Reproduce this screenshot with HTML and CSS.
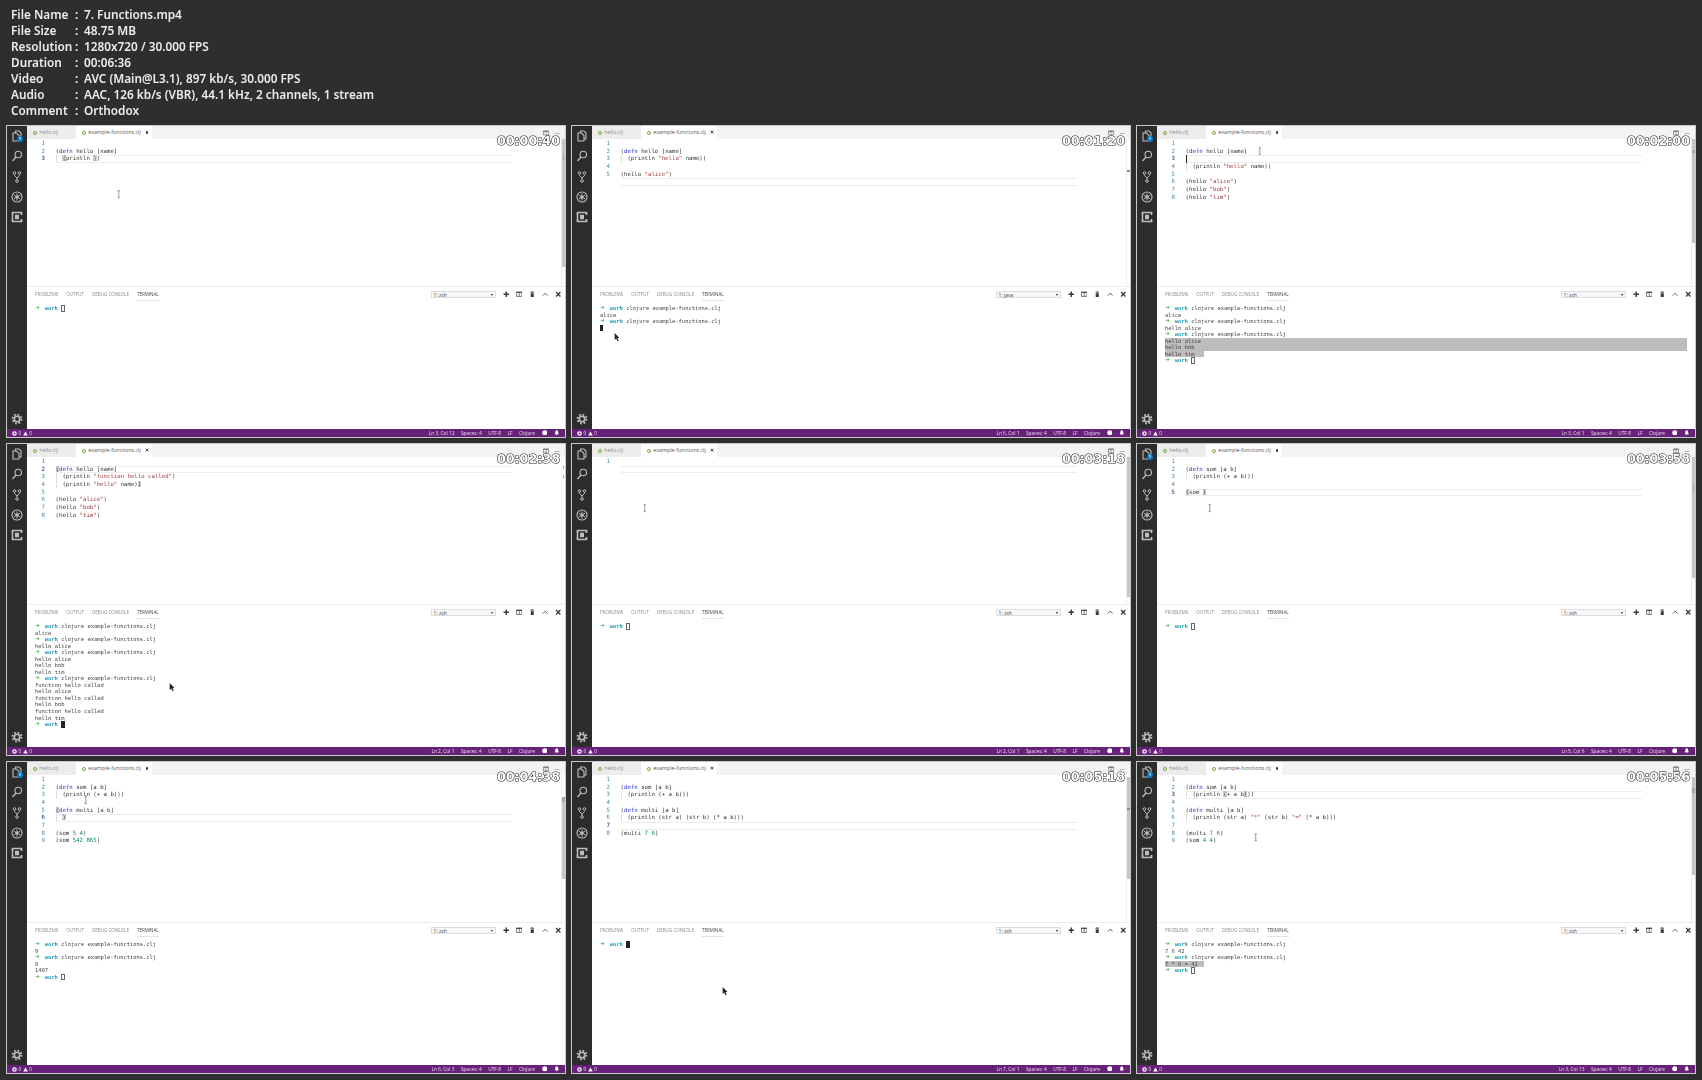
FILE: index.html
```html
<!DOCTYPE html>
<html lang="en">
<head>
<meta charset="utf-8">
<title>7. Functions.mp4</title>
<link rel="stylesheet" href="styles.css">
</head>
<body>
<svg class="defs" aria-hidden="true">
  <symbol id="i-files" viewBox="0 0 24 24"><path d="M9 6V2h7l4 4v12h-4M4 6h7l5 5v11H4z" fill="none" stroke="currentColor" stroke-width="2.2"/></symbol>
  <symbol id="i-search" viewBox="0 0 24 24"><circle cx="14.5" cy="9" r="6.5" fill="none" stroke="currentColor" stroke-width="2.2"/><path d="M10 14l-7 8" stroke="currentColor" stroke-width="2.8"/></symbol>
  <symbol id="i-git" viewBox="0 0 24 24"><g fill="none" stroke="currentColor" stroke-width="2"><circle cx="7" cy="4" r="2.6"/><circle cx="17" cy="4" r="2.6"/><circle cx="12" cy="20" r="2.6"/><path d="M7 7v2l5 5 5-5V7M12 14v3"/></g></symbol>
  <symbol id="i-debug" viewBox="0 0 24 24"><circle cx="12" cy="12" r="10" fill="none" stroke="currentColor" stroke-width="2.2"/><path d="M12 5v14M5.900 8.500l12.200 7M5.900 15.500l12.200-7" stroke="currentColor" stroke-width="2"/><circle cx="12" cy="12" r="3.200" fill="currentColor"/></symbol>
  <symbol id="i-ext" viewBox="0 0 24 24"><path d="M3 8V3h18v5M3 16v5h18v-5" fill="none" stroke="currentColor" stroke-width="3"/><path d="M3 3v18M21 3v4M21 17v4" stroke="currentColor" stroke-width="3"/><rect x="8" y="7.500" width="8" height="9" fill="currentColor"/></symbol>
  <symbol id="i-gear" viewBox="0 0 24 24"><circle cx="12" cy="12" r="5.500" fill="none" stroke="currentColor" stroke-width="3.400"/><circle cx="12" cy="12" r="9" fill="none" stroke="currentColor" stroke-width="3.600" stroke-dasharray="3.530 3.540"/></symbol>
  <symbol id="i-plus" viewBox="0 0 12 12"><path d="M6 1v10M1 6h10" stroke="currentColor" stroke-width="2.600"/></symbol>
  <symbol id="i-split" viewBox="0 0 12 12"><path d="M1 2h10v8H1zM6 2v8" fill="none" stroke="currentColor" stroke-width="1.200"/><path d="M1 2.500h10" stroke="currentColor" stroke-width="1.800"/></symbol>
  <symbol id="i-trash" viewBox="0 0 12 12"><path d="M4.500 1h3M2.500 2.500h7" stroke="currentColor" stroke-width="1.300"/><path d="M3.200 4h5.600v7H3.200z" fill="currentColor"/></symbol>
  <symbol id="i-up" viewBox="0 0 12 12"><path d="M1.500 8.500L6 4l4.500 4.500" fill="none" stroke="currentColor" stroke-width="1.500"/></symbol>
  <symbol id="i-x" viewBox="0 0 12 12"><path d="M2 2l8 8M10 2l-8 8" stroke="currentColor" stroke-width="2.400"/></symbol>
  <symbol id="i-smile" viewBox="0 0 12 12"><circle cx="6" cy="6" r="5.500" fill="currentColor"/></symbol>
  <symbol id="i-bell" viewBox="0 0 12 12"><path d="M6 .5C8 .5 9 2 9 4.500c0 2 .8 3.500 1.800 4.500H1.200C2.200 8 3 6.500 3 4.500 3 2 4 .5 6 .5zM4.700 10h2.600v1.500H4.700z" fill="currentColor"/></symbol>
  <symbol id="i-err" viewBox="0 0 12 12"><circle cx="6" cy="6" r="4" fill="none" stroke="currentColor" stroke-width="3"/></symbol>
  <symbol id="i-warn" viewBox="0 0 12 12"><path d="M6 1l5.500 10H.5z" fill="currentColor"/></symbol>
  <symbol id="i-ibeam" viewBox="0 0 6 14"><path d="M1 1h4M1 13h4M3 1v12" fill="none" stroke="currentColor" stroke-width="1"/></symbol>
  <symbol id="i-arrow" viewBox="0 0 8 13"><path d="M1 0v10l2.400-2.200L5 12l1.800-.8-1.600-4H8z" fill="currentColor"/></symbol>
</svg>

<header class="meta">
  <span>File Name</span><span>:</span><span>7. Functions.mp4</span>
  <span>File Size</span><span>:</span><span>48.75 MB</span>
  <span>Resolution</span><span>:</span><span>1280x720 / 30.000 FPS</span>
  <span>Duration</span><span>:</span><span>00:06:36</span>
  <span>Video</span><span>:</span><span>AVC (Main@L3.1), 897 kb/s, 30.000 FPS</span>
  <span>Audio</span><span>:</span><span>AAC, 126 kb/s (VBR), 44.1 kHz, 2 channels, 1 stream</span>
  <span>Comment</span><span>:</span><span>Orthodox</span>
</header>

<main class="sheet">

<!-- 00:00:40 -->
<article class="tile">
  <div class="shot">
    <div class="body">
      <nav class="side">
        <span class="act"><svg><use href="#i-files"/></svg><b class="badge">1</b></span>
        <span class="act"><svg><use href="#i-search"/></svg></span>
        <span class="act"><svg><use href="#i-git"/></svg></span>
        <span class="act"><svg><use href="#i-debug"/></svg></span>
        <span class="act"><svg><use href="#i-ext"/></svg></span>
        <span class="act gear"><svg><use href="#i-gear"/></svg></span>
      </nav>
      <div class="work">
        <div class="tabs">
          <span class="tab"><i class="fi"></i>hello.clj</span>
          <span class="tab on"><i class="fi"></i>example-functions.clj<b class="dot"></b></span>
          <span class="tools"><svg><use href="#i-split"/></svg><span class="more">···</span></span>
        </div>
        <div class="editor">
          <div class="row"><span class="no">1</span><span class="code"></span></div>
          <div class="row"><span class="no">2</span><span class="code">(<span class="k">defn</span> hello [name]</span></div>
          <div class="row cur"><span class="no">3</span><span class="code g">  <span class="bm">(</span>println <span class="bm">)</span>)</span></div>
          <div class="track"><div class="thumb t-a"></div><div class="mark m-a"></div></div>
        </div>
        <section class="panel">
          <div class="phead">
            <span class="ptab">Problems</span><span class="ptab">Output</span><span class="ptab">Debug Console</span><span class="ptab on">Terminal</span>
            <span class="pick">1: zsh<i class="caret"></i></span>
            <span class="pico"><svg><use href="#i-plus"/></svg></span><span class="pico"><svg><use href="#i-split"/></svg></span><span class="pico"><svg><use href="#i-trash"/></svg></span><span class="pico"><svg><use href="#i-up"/></svg></span><span class="pico"><svg><use href="#i-x"/></svg></span>
          </div>
          <div class="term">
            <div><span class="arw">➜</span>  <span class="cwd">work</span> <i class="box"></i></div>
          </div>
        </section>
      </div>
    </div>
    <footer class="status">
      <svg><use href="#i-err"/></svg><span>0</span><svg><use href="#i-warn"/></svg><span>0</span>
      <span class="right">Ln 3, Col 12</span><span>Spaces: 4</span><span>UTF-8</span><span>LF</span><span>Clojure</span><svg class="si"><use href="#i-smile"/></svg><svg class="si"><use href="#i-bell"/></svg>
    </footer>
    <svg class="ptr ibeam p1"><use href="#i-ibeam"/></svg>
  </div>
  <time class="stamp">00:00:40</time>
</article>

<!-- 00:01:20 -->
<article class="tile">
  <div class="shot">
    <div class="body">
      <nav class="side">
        <span class="act"><svg><use href="#i-files"/></svg></span>
        <span class="act"><svg><use href="#i-search"/></svg></span>
        <span class="act"><svg><use href="#i-git"/></svg></span>
        <span class="act"><svg><use href="#i-debug"/></svg></span>
        <span class="act"><svg><use href="#i-ext"/></svg></span>
        <span class="act gear"><svg><use href="#i-gear"/></svg></span>
      </nav>
      <div class="work">
        <div class="tabs">
          <span class="tab"><i class="fi"></i>hello.clj</span>
          <span class="tab on"><i class="fi"></i>example-functions.clj<svg class="close"><use href="#i-x"/></svg></span>
          <span class="tools"><svg><use href="#i-split"/></svg><span class="more">···</span></span>
        </div>
        <div class="editor">
          <div class="row"><span class="no">1</span><span class="code"></span></div>
          <div class="row"><span class="no">2</span><span class="code">(<span class="k">defn</span> hello [name]</span></div>
          <div class="row"><span class="no">3</span><span class="code g">  (println <span class="s">"hello"</span> name))</span></div>
          <div class="row"><span class="no">4</span><span class="code"></span></div>
          <div class="row"><span class="no">5</span><span class="code">(hello <span class="s">"alice"</span>)</span></div>
          <div class="row cur"><span class="no"></span><span class="code"></span></div>
          <div class="track"><div class="mark m-b"></div></div>
        </div>
        <section class="panel">
          <div class="phead">
            <span class="ptab">Problems</span><span class="ptab">Output</span><span class="ptab">Debug Console</span><span class="ptab on">Terminal</span>
            <span class="pick">1: java<i class="caret"></i></span>
            <span class="pico"><svg><use href="#i-plus"/></svg></span><span class="pico"><svg><use href="#i-split"/></svg></span><span class="pico"><svg><use href="#i-trash"/></svg></span><span class="pico"><svg><use href="#i-up"/></svg></span><span class="pico"><svg><use href="#i-x"/></svg></span>
          </div>
          <div class="term">
            <div><span class="arw">➜</span>  <span class="cwd">work</span> clojure example-functions.clj</div>
            <div>alice</div>
            <div><span class="arw">➜</span>  <span class="cwd">work</span> clojure example-functions.clj</div>
            <div><i class="block"></i></div>
          </div>
        </section>
      </div>
    </div>
    <footer class="status">
      <svg><use href="#i-err"/></svg><span>0</span><svg><use href="#i-warn"/></svg><span>0</span>
      <span class="right">Ln 6, Col 1</span><span>Spaces: 4</span><span>UTF-8</span><span>LF</span><span>Clojure</span><svg class="si"><use href="#i-smile"/></svg><svg class="si"><use href="#i-bell"/></svg>
    </footer>
    <svg class="ptr arrow p2"><use href="#i-arrow"/></svg>
  </div>
  <time class="stamp">00:01:20</time>
</article>

<!-- 00:02:00 -->
<article class="tile">
  <div class="shot">
    <div class="body">
      <nav class="side">
        <span class="act"><svg><use href="#i-files"/></svg><b class="badge">1</b></span>
        <span class="act"><svg><use href="#i-search"/></svg></span>
        <span class="act"><svg><use href="#i-git"/></svg></span>
        <span class="act"><svg><use href="#i-debug"/></svg></span>
        <span class="act"><svg><use href="#i-ext"/></svg></span>
        <span class="act gear"><svg><use href="#i-gear"/></svg></span>
      </nav>
      <div class="work">
        <div class="tabs">
          <span class="tab"><i class="fi"></i>hello.clj</span>
          <span class="tab on"><i class="fi"></i>example-functions.clj<b class="dot"></b></span>
          <span class="tools"><svg><use href="#i-split"/></svg><span class="more">···</span></span>
        </div>
        <div class="editor">
          <div class="row"><span class="no">1</span><span class="code"></span></div>
          <div class="row"><span class="no">2</span><span class="code">(<span class="k">defn</span> hello [name]</span></div>
          <div class="row cur"><span class="no">3</span><span class="code"><i class="caretbar"></i></span></div>
          <div class="row"><span class="no">4</span><span class="code g">  (println <span class="s">"hello"</span> name))</span></div>
          <div class="row"><span class="no">5</span><span class="code"></span></div>
          <div class="row"><span class="no">6</span><span class="code">(hello <span class="s">"alice"</span>)</span></div>
          <div class="row"><span class="no">7</span><span class="code">(hello <span class="s">"bob"</span>)</span></div>
          <div class="row"><span class="no">8</span><span class="code">(hello <span class="s">"tim"</span>)</span></div>
          <div class="track"><div class="thumb t-c"></div><div class="mark m-c"></div></div>
        </div>
        <section class="panel">
          <div class="phead">
            <span class="ptab">Problems</span><span class="ptab">Output</span><span class="ptab">Debug Console</span><span class="ptab on">Terminal</span>
            <span class="pick">1: zsh<i class="caret"></i></span>
            <span class="pico"><svg><use href="#i-plus"/></svg></span><span class="pico"><svg><use href="#i-split"/></svg></span><span class="pico"><svg><use href="#i-trash"/></svg></span><span class="pico"><svg><use href="#i-up"/></svg></span><span class="pico"><svg><use href="#i-x"/></svg></span>
          </div>
          <div class="term">
            <div><span class="arw">➜</span>  <span class="cwd">work</span> clojure example-functions.clj</div>
            <div>alice</div>
            <div><span class="arw">➜</span>  <span class="cwd">work</span> clojure example-functions.clj</div>
            <div>hello alice</div>
            <div><span class="arw">➜</span>  <span class="cwd">work</span> clojure example-functions.clj</div>
            <div class="sel wide">hello alice</div>
            <div class="sel wide">hello bob</div>
            <div class="sel short">hello tim</div>
            <div><span class="arw">➜</span>  <span class="cwd">work</span> <i class="box"></i></div>
          </div>
        </section>
      </div>
    </div>
    <footer class="status">
      <svg><use href="#i-err"/></svg><span>0</span><svg><use href="#i-warn"/></svg><span>0</span>
      <span class="right">Ln 3, Col 1</span><span>Spaces: 4</span><span>UTF-8</span><span>LF</span><span>Clojure</span><svg class="si"><use href="#i-smile"/></svg><svg class="si"><use href="#i-bell"/></svg>
    </footer>
    <svg class="ptr ibeam p3"><use href="#i-ibeam"/></svg>
  </div>
  <time class="stamp">00:02:00</time>
</article>

<!-- 00:02:38 -->
<article class="tile">
  <div class="shot">
    <div class="body">
      <nav class="side">
        <span class="act"><svg><use href="#i-files"/></svg></span>
        <span class="act"><svg><use href="#i-search"/></svg></span>
        <span class="act"><svg><use href="#i-git"/></svg></span>
        <span class="act"><svg><use href="#i-debug"/></svg></span>
        <span class="act"><svg><use href="#i-ext"/></svg></span>
        <span class="act gear"><svg><use href="#i-gear"/></svg></span>
      </nav>
      <div class="work">
        <div class="tabs">
          <span class="tab"><i class="fi"></i>hello.clj</span>
          <span class="tab on"><i class="fi"></i>example-functions.clj<svg class="close"><use href="#i-x"/></svg></span>
          <span class="tools"><svg><use href="#i-split"/></svg><span class="more">···</span></span>
        </div>
        <div class="editor">
          <div class="row"><span class="no">1</span><span class="code"></span></div>
          <div class="row cur"><span class="no">2</span><span class="code"><span class="bm">(</span><span class="k">defn</span> hello [name]</span></div>
          <div class="row"><span class="no">3</span><span class="code g">  (println <span class="s">"function hello called"</span>)</span></div>
          <div class="row"><span class="no">4</span><span class="code g">  (println <span class="s">"hello"</span> name)<span class="bm">)</span></span></div>
          <div class="row"><span class="no">5</span><span class="code"></span></div>
          <div class="row"><span class="no">6</span><span class="code">(hello <span class="s">"alice"</span>)</span></div>
          <div class="row"><span class="no">7</span><span class="code">(hello <span class="s">"bob"</span>)</span></div>
          <div class="row"><span class="no">8</span><span class="code">(hello <span class="s">"tim"</span>)</span></div>
          <div class="track"><div class="mark m-d"></div><div class="mark m-e"></div></div>
        </div>
        <section class="panel">
          <div class="phead">
            <span class="ptab">Problems</span><span class="ptab">Output</span><span class="ptab">Debug Console</span><span class="ptab on">Terminal</span>
            <span class="pick">1: zsh<i class="caret"></i></span>
            <span class="pico"><svg><use href="#i-plus"/></svg></span><span class="pico"><svg><use href="#i-split"/></svg></span><span class="pico"><svg><use href="#i-trash"/></svg></span><span class="pico"><svg><use href="#i-up"/></svg></span><span class="pico"><svg><use href="#i-x"/></svg></span>
          </div>
          <div class="term">
            <div><span class="arw">➜</span>  <span class="cwd">work</span> clojure example-functions.clj</div>
            <div>alice</div>
            <div><span class="arw">➜</span>  <span class="cwd">work</span> clojure example-functions.clj</div>
            <div>hello alice</div>
            <div><span class="arw">➜</span>  <span class="cwd">work</span> clojure example-functions.clj</div>
            <div>hello alice</div>
            <div>hello bob</div>
            <div>hello tim</div>
            <div><span class="arw">➜</span>  <span class="cwd">work</span> clojure example-functions.clj</div>
            <div>function hello called</div>
            <div>hello alice</div>
            <div>function hello called</div>
            <div>hello bob</div>
            <div>function hello called</div>
            <div>hello tim</div>
            <div><span class="arw">➜</span>  <span class="cwd">work</span> <i class="block"></i></div>
          </div>
        </section>
      </div>
    </div>
    <footer class="status">
      <svg><use href="#i-err"/></svg><span>0</span><svg><use href="#i-warn"/></svg><span>0</span>
      <span class="right">Ln 2, Col 1</span><span>Spaces: 4</span><span>UTF-8</span><span>LF</span><span>Clojure</span><svg class="si"><use href="#i-smile"/></svg><svg class="si"><use href="#i-bell"/></svg>
    </footer>
    <svg class="ptr arrow p4"><use href="#i-arrow"/></svg>
  </div>
  <time class="stamp">00:02:38</time>
</article>

<!-- 00:03:18 -->
<article class="tile">
  <div class="shot">
    <div class="body">
      <nav class="side">
        <span class="act"><svg><use href="#i-files"/></svg></span>
        <span class="act"><svg><use href="#i-search"/></svg></span>
        <span class="act"><svg><use href="#i-git"/></svg></span>
        <span class="act"><svg><use href="#i-debug"/></svg></span>
        <span class="act"><svg><use href="#i-ext"/></svg></span>
        <span class="act gear"><svg><use href="#i-gear"/></svg></span>
      </nav>
      <div class="work">
        <div class="tabs">
          <span class="tab"><i class="fi"></i>hello.clj</span>
          <span class="tab on"><i class="fi"></i>example-functions.clj<svg class="close"><use href="#i-x"/></svg></span>
          <span class="tools"><svg><use href="#i-split"/></svg><span class="more">···</span></span>
        </div>
        <div class="editor">
          <div class="row"><span class="no">1</span><span class="code"></span></div>
          <div class="row cur"><span class="no"></span><span class="code"></span></div>
          <div class="track"><div class="thumb t-e"></div></div>
        </div>
        <section class="panel">
          <div class="phead">
            <span class="ptab">Problems</span><span class="ptab">Output</span><span class="ptab">Debug Console</span><span class="ptab on">Terminal</span>
            <span class="pick">1: zsh<i class="caret"></i></span>
            <span class="pico"><svg><use href="#i-plus"/></svg></span><span class="pico"><svg><use href="#i-split"/></svg></span><span class="pico"><svg><use href="#i-trash"/></svg></span><span class="pico"><svg><use href="#i-up"/></svg></span><span class="pico"><svg><use href="#i-x"/></svg></span>
          </div>
          <div class="term">
            <div><span class="arw">➜</span>  <span class="cwd">work</span> <i class="box"></i></div>
          </div>
        </section>
      </div>
    </div>
    <footer class="status">
      <svg><use href="#i-err"/></svg><span>0</span><svg><use href="#i-warn"/></svg><span>0</span>
      <span class="right">Ln 2, Col 1</span><span>Spaces: 4</span><span>UTF-8</span><span>LF</span><span>Clojure</span><svg class="si"><use href="#i-smile"/></svg><svg class="si"><use href="#i-bell"/></svg>
    </footer>
    <svg class="ptr ibeam p5"><use href="#i-ibeam"/></svg>
  </div>
  <time class="stamp">00:03:18</time>
</article>

<!-- 00:03:58 -->
<article class="tile">
  <div class="shot">
    <div class="body">
      <nav class="side">
        <span class="act"><svg><use href="#i-files"/></svg><b class="badge">1</b></span>
        <span class="act"><svg><use href="#i-search"/></svg></span>
        <span class="act"><svg><use href="#i-git"/></svg></span>
        <span class="act"><svg><use href="#i-debug"/></svg></span>
        <span class="act"><svg><use href="#i-ext"/></svg></span>
        <span class="act gear"><svg><use href="#i-gear"/></svg></span>
      </nav>
      <div class="work">
        <div class="tabs">
          <span class="tab"><i class="fi"></i>hello.clj</span>
          <span class="tab on"><i class="fi"></i>example-functions.clj<b class="dot"></b></span>
          <span class="tools"><svg><use href="#i-split"/></svg><span class="more">···</span></span>
        </div>
        <div class="editor">
          <div class="row"><span class="no">1</span><span class="code"></span></div>
          <div class="row"><span class="no">2</span><span class="code">(<span class="k">defn</span> som [a b]</span></div>
          <div class="row"><span class="no">3</span><span class="code g">  (println (+ a b)))</span></div>
          <div class="row"><span class="no">4</span><span class="code"></span></div>
          <div class="row cur"><span class="no">5</span><span class="code"><span class="bm">(</span>som <span class="bm">)</span></span></div>
          <div class="track"><div class="thumb t-f"></div><div class="mark m-f"></div></div>
        </div>
        <section class="panel">
          <div class="phead">
            <span class="ptab">Problems</span><span class="ptab">Output</span><span class="ptab">Debug Console</span><span class="ptab on">Terminal</span>
            <span class="pick">1: zsh<i class="caret"></i></span>
            <span class="pico"><svg><use href="#i-plus"/></svg></span><span class="pico"><svg><use href="#i-split"/></svg></span><span class="pico"><svg><use href="#i-trash"/></svg></span><span class="pico"><svg><use href="#i-up"/></svg></span><span class="pico"><svg><use href="#i-x"/></svg></span>
          </div>
          <div class="term">
            <div><span class="arw">➜</span>  <span class="cwd">work</span> <i class="box"></i></div>
          </div>
        </section>
      </div>
    </div>
    <footer class="status">
      <svg><use href="#i-err"/></svg><span>0</span><svg><use href="#i-warn"/></svg><span>0</span>
      <span class="right">Ln 5, Col 6</span><span>Spaces: 4</span><span>UTF-8</span><span>LF</span><span>Clojure</span><svg class="si"><use href="#i-smile"/></svg><svg class="si"><use href="#i-bell"/></svg>
    </footer>
    <svg class="ptr ibeam p6"><use href="#i-ibeam"/></svg>
  </div>
  <time class="stamp">00:03:58</time>
</article>

<!-- 00:04:38 -->
<article class="tile">
  <div class="shot">
    <div class="body">
      <nav class="side">
        <span class="act"><svg><use href="#i-files"/></svg><b class="badge">1</b></span>
        <span class="act"><svg><use href="#i-search"/></svg></span>
        <span class="act"><svg><use href="#i-git"/></svg></span>
        <span class="act"><svg><use href="#i-debug"/></svg></span>
        <span class="act"><svg><use href="#i-ext"/></svg></span>
        <span class="act gear"><svg><use href="#i-gear"/></svg></span>
      </nav>
      <div class="work">
        <div class="tabs">
          <span class="tab"><i class="fi"></i>hello.clj</span>
          <span class="tab on"><i class="fi"></i>example-functions.clj<b class="dot"></b></span>
          <span class="tools"><svg><use href="#i-split"/></svg><span class="more">···</span></span>
        </div>
        <div class="editor">
          <div class="row"><span class="no">1</span><span class="code"></span></div>
          <div class="row"><span class="no">2</span><span class="code">(<span class="k">defn</span> som [a b]</span></div>
          <div class="row"><span class="no">3</span><span class="code g">  (println (+ a b)))</span></div>
          <div class="row"><span class="no">4</span><span class="code"></span></div>
          <div class="row"><span class="no">5</span><span class="code"><span class="bm">(</span><span class="k">defn</span> multi [a b]</span></div>
          <div class="row cur"><span class="no">6</span><span class="code g">  <span class="bm">)</span></span></div>
          <div class="row"><span class="no">7</span><span class="code"></span></div>
          <div class="row"><span class="no">8</span><span class="code">(som <span class="n">5</span> <span class="n">4</span>)</span></div>
          <div class="row"><span class="no">9</span><span class="code">(som <span class="n">542</span> <span class="n">865</span>)</span></div>
          <div class="track"><div class="thumb t-g"></div><div class="mark m-g"></div></div>
        </div>
        <section class="panel">
          <div class="phead">
            <span class="ptab">Problems</span><span class="ptab">Output</span><span class="ptab">Debug Console</span><span class="ptab on">Terminal</span>
            <span class="pick">1: zsh<i class="caret"></i></span>
            <span class="pico"><svg><use href="#i-plus"/></svg></span><span class="pico"><svg><use href="#i-split"/></svg></span><span class="pico"><svg><use href="#i-trash"/></svg></span><span class="pico"><svg><use href="#i-up"/></svg></span><span class="pico"><svg><use href="#i-x"/></svg></span>
          </div>
          <div class="term">
            <div><span class="arw">➜</span>  <span class="cwd">work</span> clojure example-functions.clj</div>
            <div>9</div>
            <div><span class="arw">➜</span>  <span class="cwd">work</span> clojure example-functions.clj</div>
            <div>9</div>
            <div>1407</div>
            <div><span class="arw">➜</span>  <span class="cwd">work</span> <i class="box"></i></div>
          </div>
        </section>
      </div>
    </div>
    <footer class="status">
      <svg><use href="#i-err"/></svg><span>0</span><svg><use href="#i-warn"/></svg><span>0</span>
      <span class="right">Ln 6, Col 3</span><span>Spaces: 4</span><span>UTF-8</span><span>LF</span><span>Clojure</span><svg class="si"><use href="#i-smile"/></svg><svg class="si"><use href="#i-bell"/></svg>
    </footer>
    <svg class="ptr ibeam p7"><use href="#i-ibeam"/></svg>
  </div>
  <time class="stamp">00:04:38</time>
</article>

<!-- 00:05:18 -->
<article class="tile">
  <div class="shot">
    <div class="body">
      <nav class="side">
        <span class="act"><svg><use href="#i-files"/></svg></span>
        <span class="act"><svg><use href="#i-search"/></svg></span>
        <span class="act"><svg><use href="#i-git"/></svg></span>
        <span class="act"><svg><use href="#i-debug"/></svg></span>
        <span class="act"><svg><use href="#i-ext"/></svg></span>
        <span class="act gear"><svg><use href="#i-gear"/></svg></span>
      </nav>
      <div class="work">
        <div class="tabs">
          <span class="tab"><i class="fi"></i>hello.clj</span>
          <span class="tab on"><i class="fi"></i>example-functions.clj<svg class="close"><use href="#i-x"/></svg></span>
          <span class="tools"><svg><use href="#i-split"/></svg><span class="more">···</span></span>
        </div>
        <div class="editor">
          <div class="row"><span class="no">1</span><span class="code"></span></div>
          <div class="row"><span class="no">2</span><span class="code">(<span class="k">defn</span> som [a b]</span></div>
          <div class="row"><span class="no">3</span><span class="code g">  (println (+ a b)))</span></div>
          <div class="row"><span class="no">4</span><span class="code"></span></div>
          <div class="row"><span class="no">5</span><span class="code">(<span class="k">defn</span> multi [a b]</span></div>
          <div class="row"><span class="no">6</span><span class="code g">  (println (str a) (str b) (* a b)))</span></div>
          <div class="row cur"><span class="no">7</span><span class="code"></span></div>
          <div class="row"><span class="no">8</span><span class="code">(multi <span class="n">7</span> <span class="n">6</span>)</span></div>
          <div class="track"><div class="thumb t-h"></div><div class="mark m-h"></div></div>
        </div>
        <section class="panel">
          <div class="phead">
            <span class="ptab">Problems</span><span class="ptab">Output</span><span class="ptab">Debug Console</span><span class="ptab on">Terminal</span>
            <span class="pick">1: zsh<i class="caret"></i></span>
            <span class="pico"><svg><use href="#i-plus"/></svg></span><span class="pico"><svg><use href="#i-split"/></svg></span><span class="pico"><svg><use href="#i-trash"/></svg></span><span class="pico"><svg><use href="#i-up"/></svg></span><span class="pico"><svg><use href="#i-x"/></svg></span>
          </div>
          <div class="term">
            <div><span class="arw">➜</span>  <span class="cwd">work</span> <i class="block"></i></div>
          </div>
        </section>
      </div>
    </div>
    <footer class="status">
      <svg><use href="#i-err"/></svg><span>0</span><svg><use href="#i-warn"/></svg><span>0</span>
      <span class="right">Ln 7, Col 1</span><span>Spaces: 4</span><span>UTF-8</span><span>LF</span><span>Clojure</span><svg class="si"><use href="#i-smile"/></svg><svg class="si"><use href="#i-bell"/></svg>
    </footer>
    <svg class="ptr arrow p8"><use href="#i-arrow"/></svg>
  </div>
  <time class="stamp">00:05:18</time>
</article>

<!-- 00:05:56 -->
<article class="tile">
  <div class="shot">
    <div class="body">
      <nav class="side">
        <span class="act"><svg><use href="#i-files"/></svg><b class="badge">1</b></span>
        <span class="act"><svg><use href="#i-search"/></svg></span>
        <span class="act"><svg><use href="#i-git"/></svg></span>
        <span class="act"><svg><use href="#i-debug"/></svg></span>
        <span class="act"><svg><use href="#i-ext"/></svg></span>
        <span class="act gear"><svg><use href="#i-gear"/></svg></span>
      </nav>
      <div class="work">
        <div class="tabs">
          <span class="tab"><i class="fi"></i>hello.clj</span>
          <span class="tab on"><i class="fi"></i>example-functions.clj<b class="dot"></b></span>
          <span class="tools"><svg><use href="#i-split"/></svg><span class="more">···</span></span>
        </div>
        <div class="editor">
          <div class="row"><span class="no">1</span><span class="code"></span></div>
          <div class="row"><span class="no">2</span><span class="code">(<span class="k">defn</span> som [a b]</span></div>
          <div class="row cur"><span class="no">3</span><span class="code g">  (println <span class="bm">(</span>+ a b<span class="bm">)</span>))</span></div>
          <div class="row"><span class="no">4</span><span class="code"></span></div>
          <div class="row"><span class="no">5</span><span class="code">(<span class="k">defn</span> multi [a b]</span></div>
          <div class="row"><span class="no">6</span><span class="code g">  (println (str a) <span class="s">"*"</span> (str b) <span class="s">"="</span> (* a b)))</span></div>
          <div class="row"><span class="no">7</span><span class="code"></span></div>
          <div class="row"><span class="no">8</span><span class="code">(multi <span class="n">7</span> <span class="n">6</span>)</span></div>
          <div class="row"><span class="no">9</span><span class="code">(som <span class="n">4</span> <span class="n">4</span>)</span></div>
          <div class="track"><div class="thumb t-i"></div><div class="mark m-i"></div></div>
        </div>
        <section class="panel">
          <div class="phead">
            <span class="ptab">Problems</span><span class="ptab">Output</span><span class="ptab">Debug Console</span><span class="ptab on">Terminal</span>
            <span class="pick">1: zsh<i class="caret"></i></span>
            <span class="pico"><svg><use href="#i-plus"/></svg></span><span class="pico"><svg><use href="#i-split"/></svg></span><span class="pico"><svg><use href="#i-trash"/></svg></span><span class="pico"><svg><use href="#i-up"/></svg></span><span class="pico"><svg><use href="#i-x"/></svg></span>
          </div>
          <div class="term">
            <div><span class="arw">➜</span>  <span class="cwd">work</span> clojure example-functions.clj</div>
            <div>7 6 42</div>
            <div><span class="arw">➜</span>  <span class="cwd">work</span> clojure example-functions.clj</div>
            <div class="sel short">7 * 6 = 42</div>
            <div><span class="arw">➜</span>  <span class="cwd">work</span> <i class="box"></i></div>
          </div>
        </section>
      </div>
    </div>
    <footer class="status">
      <svg><use href="#i-err"/></svg><span>0</span><svg><use href="#i-warn"/></svg><span>0</span>
      <span class="right">Ln 3, Col 13</span><span>Spaces: 4</span><span>UTF-8</span><span>LF</span><span>Clojure</span><svg class="si"><use href="#i-smile"/></svg><svg class="si"><use href="#i-bell"/></svg>
    </footer>
    <svg class="ptr ibeam p9"><use href="#i-ibeam"/></svg>
  </div>
  <time class="stamp">00:05:56</time>
</article>

</main>
</body>
</html>
```

FILE: styles.css
```css
* { box-sizing: border-box; }
html, body { margin: 0; height: 100%; }
body { background: #2e2e2e; overflow: hidden; }
.defs { position: absolute; width: 0; height: 0; }

/* file information header */
.meta {
  height: 125px;
  padding: 6px 0 0 11px;
  display: grid;
  grid-template-columns: 64px 9px 1fr;
  grid-auto-rows: 16px;
  font: 600 11.800px/16px "Noto Sans", sans-serif;
  color: #ececec;
  filter: blur(.3px);
}

/* contact sheet */
.sheet {
  display: grid;
  grid-template-columns: repeat(3, 560px);
  grid-auto-rows: 313px;
  gap: 5px;
  padding-left: 6px;
}
.tile { position: relative; border: 1px solid #c9c9c9; background: #fff; overflow: hidden; }
.shot { height: 100%; display: flex; flex-direction: column; filter: blur(.32px); position: relative; }
.body { flex: 1; display: flex; min-height: 0; }

/* activity bar */
.side { width: 20px; padding-right: 1px; background: #2c2c2c; color: #bdbdbd; display: flex; flex-direction: column; flex: none; }
.act { height: 20.250px; display: flex; align-items: center; justify-content: center; position: relative; flex: none; }
.act svg { width: 12px; height: 12px; }
.gear { margin-top: auto; height: 20px; }
.badge {
  position: absolute; left: 10px; top: 10px; width: 6px; height: 6px; border-radius: 50%;
  background: #007acc; color: #fff; font: 700 4px/6px "Open Sans", sans-serif; text-align: center;
}

.work { flex: 1; min-width: 0; display: flex; flex-direction: column; }

/* tab strip */
.tabs { height: 13px; flex: none; display: flex; background: #f3f3f3; font: 5.300px/13px "Open Sans", sans-serif; color: #8a8a8a; }
.tab { width: 49px; background: #ececec; padding-left: 5.500px; display: flex; align-items: center; gap: 2.800px; white-space: nowrap; }
.tab.on { width: 76px; background: #fff; color: #555; }
.fi { width: 4px; height: 4px; border-radius: 50%; border: 1.100px solid #7ca63c; flex: none; }
.dot { width: 2.800px; height: 2.800px; border-radius: 50%; background: #333; margin-left: 2px; flex: none; }
.close { width: 4.200px; height: 4.200px; color: #222; margin-left: 1.600px; flex: none; }
.tools { margin-left: auto; display: flex; align-items: center; width: 26px; color: #666; }
.tools svg { width: 6px; height: 6px; margin-left: 3.500px; }
.more { margin-left: 6px; line-height: 10px; font-size: 6px; font-weight: 700; }

/* editor */
.editor { height: 147px; flex: none; padding-top: .850px; position: relative; font: 5.700px/7.700px "DejaVu Sans Mono", monospace; color: #333; }
.row { display: flex; height: 7.700px; white-space: pre; }
.no { width: 18px; margin-right: 10.600px; text-align: right; color: #3f8ba3; flex: none; }
.cur .no { color: #0b216f; }
.code { width: 456.500px; height: 7.700px; flex: none; }
.cur .code { box-shadow: inset 0 1px #ececec, inset 0 -1px #ececec; }
.g, .cur .g { background: linear-gradient(#dedede, #dedede) left / 1px 100% no-repeat; }
.k { color: #2a2ad0; }
.s { color: #a33a3a; }
.n { color: #09885a; }
.bm { background: #e2e2e2; box-shadow: inset 0 0 0 .5px #bbb; }
.caretbar { display: inline-block; width: 1px; height: 7.700px; background: #222; vertical-align: top; }

/* scrollbar and overview marks */
.track { position: absolute; right: 0; top: 0; bottom: 0; width: 4.500px; border-left: 1px solid #eee; }
.thumb { position: absolute; left: 0; right: 0; top: 0; background: #c6c6c6; }
.mark { position: absolute; left: 0; right: 0; height: 1.500px; background: #8e8e8e; }
.t-a { height: 128px; }
.t-c { height: 104px; }
.t-e { height: 140px; }
.t-f { height: 121px; }
.t-g { top: 22px; height: 82px; }
.t-h { top: 2px; height: 102px; }
.t-i { top: 2px; height: 98px; }
.m-a { top: 16px; height: 5px; left: 1px; right: 1px; background: #a8a8a8; }
.m-b { top: 31px; }
.m-c { top: 11px; height: 3px; background: #a8a8a8; }
.m-d { top: 8px; height: 4px; left: 1px; right: 1px; background: #b0b0b0; }
.m-e { top: 18px; height: 4px; left: 1px; right: 1px; background: #b0b0b0; }
.m-f { top: 29px; height: 5px; left: 1px; right: 1px; background: #a8a8a8; }
.m-g { top: 22px; height: 5px; background: #a8a8a8; }
.m-h { top: 33px; }
.m-i { top: 13px; height: 5px; background: #a8a8a8; }

/* bottom panel */
.panel { flex: 1; min-height: 0; border-top: 1px solid #ececec; }
.phead { height: 14px; display: flex; padding-left: 8px; font: 4.500px/14.500px "Open Sans", sans-serif; text-transform: uppercase; color: #8c8c8c; }
.ptab { margin-right: 8px; height: 14px; white-space: nowrap; }
.ptab.on { color: #4a4a4a; border-bottom: 1px solid #e2e2e2; }
.pick {
  margin: 3.500px 4px 0 auto; width: 65px; height: 7.500px; padding-left: 2px; background: #f7f7f7; border: .5px solid #ddd;
  font: 5px/7px "Open Sans", sans-serif; text-transform: none; color: #444; position: relative;
}
.caret { position: absolute; right: 2px; top: 2.500px; border: 1.200px solid transparent; border-top: 2px solid #222; border-bottom: 0; }
.pico { width: 13.100px; display: flex; align-items: center; justify-content: center; height: 14.500px; color: #3a3a3a; flex: none; }
.pico svg { width: 6.500px; height: 6.500px; }

/* terminal */
.term { padding: 4.300px 0 0 8px; font: 5.450px/6.520px "DejaVu Sans Mono", monospace; color: #444; }
.term > div { height: 6.520px; white-space: pre; }
.arw { display: inline-block; width: 3.280px; color: #2db53c; font-weight: 700; font-size: 7.500px; }
.cwd { color: #1f9bb5; font-weight: 700; }
.box { display: inline-block; width: 3.300px; height: 6.500px; border: .7px solid #666; vertical-align: top; }
.block { display: inline-block; width: 3.300px; height: 6.500px; background: #222; vertical-align: top; }
.sel { background: #bdbdbd; }
.wide { width: 522px; }
.short { width: 39px; }

/* status bar */
.status {
  height: 8px; flex: none; display: flex; align-items: center; gap: 1.500px; padding: 0 6px 0 5px;
  background: #68217a; color: #e8dcec; font: 4.800px/8px "Open Sans", sans-serif;
}
.status span { white-space: nowrap; }
.status svg { width: 5px; height: 5px; color: #fff; flex: none; }
.status span + span { margin-left: 5px; }
.status .right { margin-left: auto; }
.status .si { margin-left: 5px; width: 5.500px; height: 5.500px; }

/* mouse pointers seen in the recording */
.ptr { position: absolute; color: #333; }
.ibeam { width: 3.500px; height: 8.500px; color: #555; }
.arrow { width: 5.500px; height: 9px; color: #222; }
.p1 { left: 109.500px; top: 63.500px; }
.p2 { left: 41.500px; top: 206.500px; }
.p3 { left: 121px; top: 20.500px; }
.p4 { left: 161.500px; top: 238.500px; }
.p5 { left: 70.500px; top: 60px; }
.p6 { left: 71px; top: 60px; }
.p7 { left: 77px; top: 34px; }
.p8 { left: 150px; top: 225px; }
.p9 { left: 116.500px; top: 71px; }

/* burned-in timestamp */
.stamp {
  position: absolute; right: 5px; top: 6.500px;
  font: 700 12.700px/16px "DejaVu Sans", sans-serif; color: #fff;
  -webkit-text-stroke: 1px #111; paint-order: stroke fill;
}
```
